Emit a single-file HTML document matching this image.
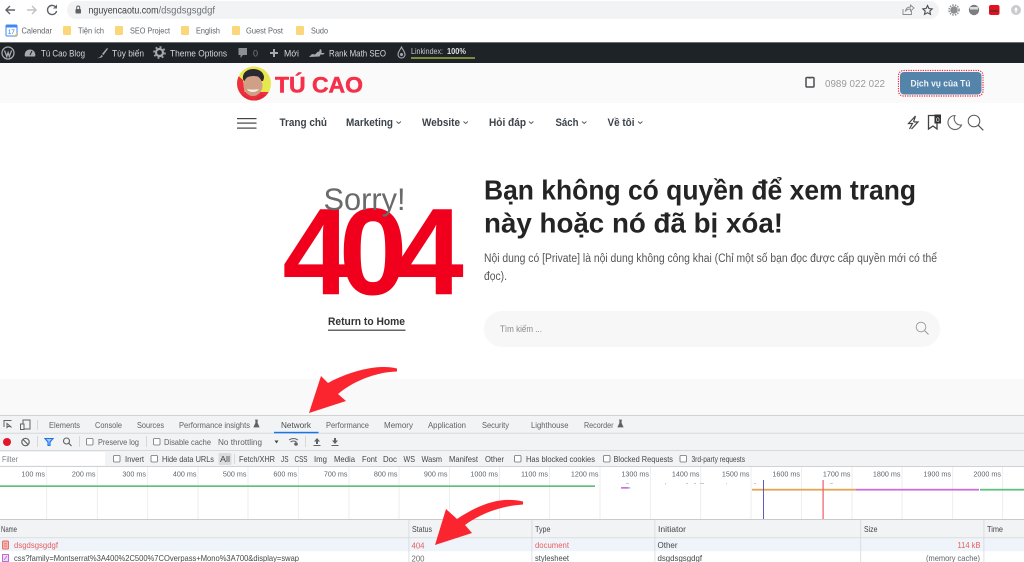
<!DOCTYPE html>
<html lang="vi"><head><meta charset="utf-8"><title>404</title>
<style>
html,body{margin:0;padding:0;background:#fff;width:1024px;height:562px;overflow:hidden}
svg{display:block}
text{font-family:"Liberation Sans","Noto Sans CJK SC",sans-serif}
.d{font-size:8.5px;fill:#5f6368}
.b{font-size:8.5px;fill:#4a4d51}
.a{font-size:9.5px;fill:#d5d8da}
.n{font-size:11px;font-weight:700;fill:#3c434a}
.t{font-size:7.2px;fill:#5f6368;text-anchor:end}
.tb{font-size:8.5px;fill:#44474a}
.cb{fill:#fff;stroke:#6e7175;stroke-width:.8}
</style></head><body>
<svg width="1024" height="562" viewBox="0 0 1024 562" xmlns="http://www.w3.org/2000/svg">
<rect width="1024" height="562" fill="#fff"/>
<!-- browser toolbar -->
<rect x="67" y="1" width="872" height="18" rx="9" fill="#f1f3f4"/>
<path d="M15 10H6M10 6l-4 4 4 4" fill="none" stroke="#5f6368" stroke-width="1.4"/>
<path d="M27 10h9M32 6l4 4-4 4" fill="none" stroke="#bfc2c5" stroke-width="1.4"/>
<path d="M56 7.5A4.6 4.6 0 1 0 56.6 11" fill="none" stroke="#5f6368" stroke-width="1.4"/><path d="M57 4.5v4h-4z" fill="#5f6368"/>
<rect x="75.5" y="9" width="5.5" height="4.5" rx=".8" fill="#5f6368"/><path d="M76.7 9V7.5a1.5 1.5 0 0 1 3 0V9" fill="none" stroke="#5f6368"/>
<text x="88.5" y="13.5" font-size="10.5" fill="#3c4043" textLength="70" lengthAdjust="spacingAndGlyphs">nguyencaotu.com</text>
<text x="158.5" y="13.5" font-size="10.5" fill="#6f7378" textLength="56.5" lengthAdjust="spacingAndGlyphs">/dsgdsgsgdgf</text>
<path d="M903 9v5.5h8.5V11M905.5 11c.5-3 2.5-4 5-4V5l3.500 3-3.500 3V9c-2 0-3.500.5-5 2z" fill="none" stroke="#8a8d91" stroke-width=".9"/>
<path d="M927.5 5.5l1.400 3 3.300.4-2.400 2.200.7 3.200-3-1.600-3 1.600.7-3.200-2.400-2.200 3.300-.4z" fill="none" stroke="#4a4d51" stroke-width="1.100"/>
<circle cx="954" cy="10" r="3.800" fill="#8d9093"/><circle cx="954" cy="10" r="5" fill="none" stroke="#8d9093" stroke-width="1.500" stroke-dasharray="1.500 1.200"/>
<circle cx="974" cy="10" r="5.200" fill="#7c7f82"/><rect x="970" y="7" width="8" height="2.500" fill="#ddd"/>
<rect x="989" y="5" width="10.500" height="10" rx="2" fill="#e3101f"/><rect x="990" y="10" width="8.500" height="2" fill="#80262a"/>
<circle cx="1016" cy="10" r="5" fill="#c9cbce"/><path d="M1016 7l2 3h-1.200v2.500h-1.600V10H1014z" fill="#fff"/>
<!-- bookmarks -->
<rect x="6" y="25" width="11" height="11" rx="1" fill="#fff" stroke="#4285f4" stroke-width="1"/><rect x="6" y="25" width="11" height="2.500" fill="#4285f4"/><path d="M17 33v3h-3z" fill="#fbbc05"/><text x="8" y="34" font-size="6" fill="#1a73e8">17</text>
<text x="21.500" y="33.500" class="d" textLength="30.500" lengthAdjust="spacingAndGlyphs">Calendar</text>
<rect x="63" y="26" width="8" height="9" rx="1" fill="#fbd77a"/><text x="78" y="33.500" class="d" textLength="26" lengthAdjust="spacingAndGlyphs">Tiện ích</text>
<rect x="115" y="26" width="8" height="9" rx="1" fill="#fbd77a"/><text x="130" y="33.500" class="d" textLength="40" lengthAdjust="spacingAndGlyphs">SEO Project</text>
<rect x="181" y="26" width="8" height="9" rx="1" fill="#fbd77a"/><text x="196" y="33.500" class="d" textLength="24" lengthAdjust="spacingAndGlyphs">English</text>
<rect x="232" y="26" width="8" height="9" rx="1" fill="#fbd77a"/><text x="246" y="33.500" class="d" textLength="37" lengthAdjust="spacingAndGlyphs">Guest Post</text>
<rect x="296" y="26" width="8" height="9" rx="1" fill="#fbd77a"/><text x="311" y="33.500" class="d" textLength="17" lengthAdjust="spacingAndGlyphs">Sudo</text>
<!-- admin bar -->
<rect y="42" width="1024" height="21" fill="#1d2327"/><rect y="42" width="1024" height=".7" fill="#8d9194"/>
<circle cx="8" cy="53" r="6" fill="none" stroke="#a7aaad" stroke-width="1.300"/><path d="M4.500 50.500l2.300 6 1.300-4 1.200 4 2.300-6" fill="none" stroke="#a7aaad" stroke-width="1.300"/>
<path d="M25 56.500a5.300 5.300 0 1 1 10 0z" fill="#a7aaad"/><path d="M30 55l2-4" stroke="#1d2327"/>
<text x="41" y="56.500" class="a" textLength="44" lengthAdjust="spacingAndGlyphs">Tú Cao Blog</text>
<path d="M97 58c3 0 3.500-1.500 4.500-3l1.500 1c-1 1.500-3 2.500-6 2zM102 54l5-6 1 .8-4.500 6.200z" fill="#a7aaad"/>
<text x="112" y="56.500" class="a" textLength="32" lengthAdjust="spacingAndGlyphs">Tùy biến</text>
<circle cx="159.500" cy="52.500" r="3.500" fill="none" stroke="#a7aaad" stroke-width="2.200"/><circle cx="159.500" cy="52.500" r="5.500" fill="none" stroke="#a7aaad" stroke-width="1.600" stroke-dasharray="2 2.300"/>
<text x="170" y="56.500" class="a" textLength="57" lengthAdjust="spacingAndGlyphs">Theme Options</text>
<path d="M238.500 48h8.500v7h-4l-2.500 3v-3h-2z" fill="#8c8f94"/>
<text x="253" y="56.500" font-size="9.500" fill="#7b7f84" textLength="5" lengthAdjust="spacingAndGlyphs">0</text>
<path d="M274 49v8M270 53h8" stroke="#a7aaad" stroke-width="2"/>
<text x="284" y="56.500" class="a" textLength="15" lengthAdjust="spacingAndGlyphs">Mới</text>
<path d="M309 57l3-3 3 .5 3-3 1 .5 1-3 1.500 1v3h3l-1 1.500h-3l-1 2z" fill="#a7aaad"/>
<text x="329" y="56.500" class="a" textLength="57" lengthAdjust="spacingAndGlyphs">Rank Math SEO</text>
<path d="M401.500 47c1.500 3 3.500 5 3.500 7.500a3.500 3.500 0 0 1-7 0c0-2.500 2-4.500 3.500-7.500z" fill="none" stroke="#a7aaad" stroke-width="1.100"/><circle cx="401.500" cy="54.500" r="1.500" fill="#a7aaad"/>
<text x="411" y="54" font-size="8" fill="#c5c8ca" textLength="32" lengthAdjust="spacingAndGlyphs">Linkindex:</text><text x="447" y="54" font-size="8" font-weight="700" fill="#e0e2e3" textLength="19" lengthAdjust="spacingAndGlyphs">100%</text>
<rect x="411" y="57" width="64" height="2" fill="#7a8c3a"/>
<!-- header -->
<rect y="63" width="1024" height="40" fill="#fafafa"/>
<defs><clipPath id="av"><circle cx="254" cy="83.500" r="17"/></clipPath></defs>
<g clip-path="url(#av)">
<rect x="236" y="66" width="36" height="36" fill="#e6e84c"/>
<path d="M236 74l7 6 3 22h-10zM244 92h28v12h-28z" fill="#ee2f3f"/>
<path d="M243 79c-1-6 4-10 10-10s11 3 11 9l-1 3h-19z" fill="#2b2a30"/>
<ellipse cx="253" cy="85.500" rx="9.500" ry="10.500" fill="#cf9f86"/>
<path d="M244 79c3-2 6-3 9-3s7 .5 10 3l1-3-6-5h-9l-5 3z" fill="#2b2a30"/>
<path d="M247 89c2 4 10 4 12 0-3 .8-9 .8-12 0z" fill="#f5efe9"/>
<path d="M243 94l10 6 9-6 9 3v6h-30v-6z" fill="#e2283a"/>
</g>
<text x="275" y="92.500" font-size="22" font-weight="700" fill="#f5304a" stroke="#f5304a" stroke-width=".5" textLength="88" lengthAdjust="spacingAndGlyphs">TÚ CAO</text>
<rect x="806" y="77.500" width="8" height="9.500" rx="1" fill="none" stroke="#4a4d51" stroke-width="1.500"/><rect x="808.500" y="77" width="3" height="1.500" fill="#4a4d51"/>
<text x="825" y="87" font-size="10.500" fill="#9a9a9a" textLength="60" lengthAdjust="spacingAndGlyphs">0989 022 022</text>
<rect x="898.500" y="70.500" width="84.500" height="25.500" rx="5" fill="none" stroke="#ee1f3a" stroke-width="1.200" stroke-dasharray="1.200 1.200"/>
<rect x="900" y="72" width="81.500" height="22.500" rx="4" fill="#5584ab"/>
<text x="910.500" y="86.500" font-size="9.500" font-weight="700" fill="#f0f4f8" textLength="60" lengthAdjust="spacingAndGlyphs">Dịch vụ của Tú</text>
<!-- nav -->
<rect x="237" y="118" width="19.500" height="1.200" fill="#444"/><rect x="237" y="122.500" width="19.500" height="1.200" fill="#444"/><rect x="237" y="127.500" width="19.500" height="1.200" fill="#444"/>
<text x="279.500" y="126" class="n" textLength="47.500" lengthAdjust="spacingAndGlyphs">Trang chủ</text>
<text x="346" y="126" class="n" textLength="47" lengthAdjust="spacingAndGlyphs">Marketing</text>
<text x="422" y="126" class="n" textLength="38" lengthAdjust="spacingAndGlyphs">Website</text>
<text x="489" y="126" class="n" textLength="37" lengthAdjust="spacingAndGlyphs">Hỏi đáp</text>
<text x="555.500" y="126" class="n" textLength="23" lengthAdjust="spacingAndGlyphs">Sách</text>
<text x="607.500" y="126" class="n" textLength="27" lengthAdjust="spacingAndGlyphs">Về tôi</text>
<g fill="none" stroke="#555" stroke-width=".9"><path d="M396.500 121.500l2.200 2 2.200-2"/><path d="M463.500 121.500l2.200 2 2.200-2"/><path d="M529 121.500l2.200 2 2.200-2"/><path d="M582 121.500l2.200 2 2.200-2"/><path d="M638 121.500l2.200 2 2.200-2"/></g>
<path d="M915.500 116l-7 7.500h4l-3 5.500M914 122h4l-6.500 7M915.500 116l-2 6" fill="none" stroke="#444" stroke-width="1.200"/>
<path d="M928.500 115.500h8.500v13.500l-4-3-4.500 3z" fill="none" stroke="#444" stroke-width="1.300"/><rect x="934.500" y="114.500" width="6.500" height="9" fill="#333"/><text x="936" y="122" font-size="6.500" fill="#fff">0</text>
<path d="M955 115.500a7 7 0 1 0 6.500 9.500 6.500 6.500 0 0 1-6.500-9.500z" fill="none" stroke="#666" stroke-width="1.100"/>
<circle cx="974" cy="121" r="5.800" fill="none" stroke="#555" stroke-width="1"/><path d="M978.300 125.300l5 5" stroke="#555" stroke-width="1.200"/>
<!-- content -->
<rect y="379" width="1024" height="36" fill="#f9f9f9"/>
<text x="282.500" y="294.500" font-size="123" font-weight="700" fill="#f0001c" letter-spacing="-12">404</text>
<text x="323.500" y="210" font-size="31.500" fill="#6a6a6a" textLength="82" lengthAdjust="spacingAndGlyphs">Sorry!</text>
<text x="328" y="325" font-size="11" font-weight="700" fill="#333" textLength="77" lengthAdjust="spacingAndGlyphs">Return to Home</text>
<rect x="328" y="329.500" width="77.500" height="1.500" fill="#666"/>
<text x="484" y="199.500" font-size="28" font-weight="700" fill="#242424" textLength="432" lengthAdjust="spacingAndGlyphs">Bạn không có quyền để xem trang</text>
<text x="484" y="232.500" font-size="28" font-weight="700" fill="#242424" textLength="299" lengthAdjust="spacingAndGlyphs">này hoặc nó đã bị xóa!</text>
<text x="484" y="262" font-size="11.500" fill="#555" textLength="453" lengthAdjust="spacingAndGlyphs">Nội dung có [Private] là nội dung không công khai (Chỉ một số bạn đọc được cấp quyền mới có thể</text>
<text x="484" y="280" font-size="11.500" fill="#555" textLength="23" lengthAdjust="spacingAndGlyphs">đọc).</text>
<rect x="484" y="311" width="456" height="36" rx="18" fill="#f7f7f7"/>
<text x="500" y="332" font-size="9" fill="#8a8a8a" textLength="42" lengthAdjust="spacingAndGlyphs">Tìm kiếm ...</text>
<circle cx="921" cy="327" r="4.800" fill="none" stroke="#999" stroke-width=".9"/><path d="M924.500 330.500l4 4" stroke="#999"/>
<!-- devtools -->
<rect y="415" width="1024" height="147" fill="#fff"/>
<rect y="416" width="1024" height="50" fill="#f1f3f4"/>
<rect y="415" width="1024" height="1" fill="#d0d2d5"/><rect y="432.800" width="1024" height=".8" fill="#d0d2d5"/><rect y="450" width="1024" height=".8" fill="#d0d2d5"/>
<path d="M4 427v-6.500h7.500M7 423.500l4.500 4M7 423.500v4l1-1h2.500z" fill="none" stroke="#5f6368"/>
<rect x="23" y="420" width="7" height="9" fill="none" stroke="#5f6368"/><rect x="20.500" y="424" width="3.500" height="5.500" fill="#f1f3f4" stroke="#5f6368"/>
<rect x="37" y="420" width=".7" height="10" fill="#ccc"/>
<text x="49" y="428" class="d" textLength="31" lengthAdjust="spacingAndGlyphs">Elements</text>
<text x="95" y="428" class="d" textLength="27" lengthAdjust="spacingAndGlyphs">Console</text>
<text x="137" y="428" class="d" textLength="27" lengthAdjust="spacingAndGlyphs">Sources</text>
<text x="179" y="428" class="d" textLength="71" lengthAdjust="spacingAndGlyphs">Performance insights</text>
<path d="M255 420h3M255.800 420v3l-1.800 4h5l-1.800-4v-3" fill="#5f6368" stroke="#5f6368" stroke-width=".8"/>
<text x="281" y="428" class="b" textLength="30" lengthAdjust="spacingAndGlyphs">Network</text>
<rect x="274" y="431.800" width="44.500" height="1.500" fill="#1a73e8"/>
<text x="326" y="428" class="d" textLength="43" lengthAdjust="spacingAndGlyphs">Performance</text>
<text x="384" y="428" class="d" textLength="29" lengthAdjust="spacingAndGlyphs">Memory</text>
<text x="428" y="428" class="d" textLength="38" lengthAdjust="spacingAndGlyphs">Application</text>
<text x="482" y="428" class="d" textLength="27" lengthAdjust="spacingAndGlyphs">Security</text>
<text x="531" y="428" class="d" textLength="37.500" lengthAdjust="spacingAndGlyphs">Lighthouse</text>
<text x="584" y="428" class="d" textLength="29.500" lengthAdjust="spacingAndGlyphs">Recorder</text>
<path d="M619 420h3M619.800 420v3l-1.800 4h5l-1.800-4v-3" fill="#5f6368" stroke="#5f6368" stroke-width=".8"/>
<!-- toolbar -->
<circle cx="7" cy="442" r="4" fill="#e3162b"/>
<circle cx="25.500" cy="442" r="3.700" fill="none" stroke="#5f6368" stroke-width="1.200"/><path d="M23 439.500l5 5" stroke="#5f6368" stroke-width="1.200"/>
<rect x="37" y="436" width=".7" height="11" fill="#ccc"/>
<path d="M45 438.500h8l-3 3.500v3.500h-2V442z" fill="#a8c7fa" stroke="#1a73e8" stroke-width="1.100"/>
<circle cx="66.500" cy="441" r="3" fill="none" stroke="#5f6368" stroke-width="1.100"/><path d="M68.700 443.200l2.800 2.800" stroke="#5f6368" stroke-width="1.200"/>
<rect x="79" y="436" width=".7" height="11" fill="#ccc"/>
<rect x="86.500" y="438.500" width="6.500" height="6.500" rx="1" class="cb"/>
<text x="98" y="445" class="d" textLength="41" lengthAdjust="spacingAndGlyphs">Preserve log</text>
<rect x="146" y="436" width=".7" height="11" fill="#ccc"/>
<rect x="153.500" y="438.500" width="6.500" height="6.500" rx="1" class="cb"/>
<text x="164" y="445" class="d" textLength="47" lengthAdjust="spacingAndGlyphs">Disable cache</text>
<text x="218" y="445" class="d" textLength="44" lengthAdjust="spacingAndGlyphs">No throttling</text>
<path d="M274.500 440.500h4l-2 3z" fill="#444"/>
<path d="M289 440c3-2 6-2 9 0M290.500 442c2-1.300 4-1.300 6 0" fill="none" stroke="#5f6368" stroke-width="1"/><circle cx="296" cy="444" r="1.800" fill="#5f6368"/>
<rect x="305" y="436" width=".7" height="11" fill="#ccc"/>
<path d="M317 438l3 3.500h-2v2.500h-2v-2.500h-2zM313.500 445h7v1h-7z" fill="#5f6368"/>
<path d="M335 444l3-3.500h-2V438h-2v2.500h-2zM331.500 445h7v1h-7z" fill="#5f6368"/>
<!-- filter -->
<rect y="452" width="105" height="13.500" fill="#fff"/>
<text x="2" y="462" class="d" fill-opacity=".8" textLength="16" lengthAdjust="spacingAndGlyphs">Filter</text>
<rect x="113.500" y="455.500" width="6.500" height="6.500" rx="1" class="cb"/><text x="125" y="462" class="tb" textLength="19" lengthAdjust="spacingAndGlyphs">Invert</text>
<rect x="151" y="455.500" width="6.500" height="6.500" rx="1" class="cb"/><text x="162" y="462" class="tb" textLength="52" lengthAdjust="spacingAndGlyphs">Hide data URLs</text>
<rect x="218.500" y="453" width="13" height="12" rx="1.500" fill="#dadce0"/><text x="220" y="462" class="tb" textLength="10" lengthAdjust="spacingAndGlyphs">All</text>
<rect x="234" y="454" width=".7" height="10" fill="#ccc"/>
<text x="239" y="462" class="tb" textLength="36" lengthAdjust="spacingAndGlyphs">Fetch/XHR</text>
<text x="281" y="462" class="tb" textLength="7.500" lengthAdjust="spacingAndGlyphs">JS</text>
<text x="294.500" y="462" class="tb" textLength="13" lengthAdjust="spacingAndGlyphs">CSS</text>
<text x="314" y="462" class="tb" textLength="13" lengthAdjust="spacingAndGlyphs">Img</text>
<text x="334" y="462" class="tb" textLength="21" lengthAdjust="spacingAndGlyphs">Media</text>
<text x="362" y="462" class="tb" textLength="15" lengthAdjust="spacingAndGlyphs">Font</text>
<text x="383" y="462" class="tb" textLength="14" lengthAdjust="spacingAndGlyphs">Doc</text>
<text x="403.500" y="462" class="tb" textLength="11.500" lengthAdjust="spacingAndGlyphs">WS</text>
<text x="421.500" y="462" class="tb" textLength="20.500" lengthAdjust="spacingAndGlyphs">Wasm</text>
<text x="449" y="462" class="tb" textLength="29" lengthAdjust="spacingAndGlyphs">Manifest</text>
<text x="485" y="462" class="tb" textLength="19" lengthAdjust="spacingAndGlyphs">Other</text>
<rect x="514.500" y="455.500" width="6.500" height="6.500" rx="1" class="cb"/><text x="526" y="462" class="tb" textLength="69" lengthAdjust="spacingAndGlyphs">Has blocked cookies</text>
<rect x="603.500" y="455.500" width="6.500" height="6.500" rx="1" class="cb"/><text x="613.500" y="462" class="tb" textLength="59.500" lengthAdjust="spacingAndGlyphs">Blocked Requests</text>
<rect x="680" y="455.500" width="6.500" height="6.500" rx="1" class="cb"/><text x="691.500" y="462" class="tb" textLength="53.500" lengthAdjust="spacingAndGlyphs">3rd-party requests</text>
<!-- overview -->
<rect y="466" width="1024" height="1" fill="#d0d2d5"/>
<g stroke="#e9eaec" stroke-width=".8">
<path d="M46.700 467V519M97.300 467V519M147.700 467V519M198 467V519M248 467V519M298.500 467V519M349 467V519M399 467V519M449.500 467V519M499.500 467V519M549.500 467V519M600 467V519M650.500 467V519M700.700 467V519M751 467V519M801.500 467V519M852 467V519M902 467V519M952.700 467V519M1002.700 467V519"/>
</g>
<g>
<text x="45" y="476.500" class="t">100 ms</text><text x="95.500" y="476.500" class="t">200 ms</text><text x="146" y="476.500" class="t">300 ms</text><text x="196.500" y="476.500" class="t">400 ms</text><text x="246.500" y="476.500" class="t">500 ms</text><text x="297" y="476.500" class="t">600 ms</text><text x="347.500" y="476.500" class="t">700 ms</text><text x="397.500" y="476.500" class="t">800 ms</text><text x="447.500" y="476.500" class="t">900 ms</text><text x="498" y="476.500" class="t">1000 ms</text><text x="548" y="476.500" class="t">1100 ms</text><text x="598.500" y="476.500" class="t">1200 ms</text><text x="649" y="476.500" class="t">1300 ms</text><text x="699.500" y="476.500" class="t">1400 ms</text><text x="749.500" y="476.500" class="t">1500 ms</text><text x="800" y="476.500" class="t">1600 ms</text><text x="850.500" y="476.500" class="t">1700 ms</text><text x="900.500" y="476.500" class="t">1800 ms</text><text x="951" y="476.500" class="t">1900 ms</text><text x="1001" y="476.500" class="t">2000 ms</text>
</g>
<rect x="0" y="485.300" width="595" height="1.700" fill="#5fc07f"/>
<rect x="621" y="487" width="7.500" height="1.700" fill="#cf6fe0"/><rect x="628.500" y="487" width="2" height="1.700" fill="#9fd6f0"/>
<g fill="#c9c9c9"><rect x="626" y="483" width="3" height="1"/><rect x="665" y="483" width="1" height="1.500"/><rect x="686" y="483" width="2" height="1"/><rect x="694" y="483" width="2" height="1"/><rect x="700" y="483" width="4" height="1"/><rect x="726" y="483" width="1" height="1"/><rect x="754" y="483" width="2" height="1"/><rect x="830" y="483" width="3" height="1"/></g>
<rect x="752" y="488.800" width="104" height="1.800" fill="#e6a452"/>
<rect x="856" y="488.800" width="123" height="1.800" fill="#c96fdc"/>
<rect x="980" y="488.800" width="44" height="1.800" fill="#5fc07f"/>
<rect x="763" y="480" width=".9" height="39" fill="#4a4fb0"/>
<rect x="822.500" y="480" width="1.200" height="39" fill="#ee5a66"/>
<!-- table -->
<rect y="519" width="1024" height="1" fill="#c8cacd"/>
<rect y="520" width="1024" height="17.500" fill="#f1f3f4"/>
<rect y="537.500" width="1024" height=".8" fill="#d0d2d5"/>
<rect y="538.300" width="1024" height="13" fill="#eff4fb"/>
<g fill="#d6d8db"><rect x="408.500" y="520" width=".8" height="42"/><rect x="531.500" y="520" width=".8" height="42"/><rect x="654.500" y="520" width=".8" height="42"/><rect x="860.300" y="520" width=".8" height="42"/><rect x="983.500" y="520" width=".8" height="42"/></g>
<text x="1" y="532" class="tb" textLength="16" lengthAdjust="spacingAndGlyphs">Name</text>
<text x="412" y="532" class="tb" textLength="20" lengthAdjust="spacingAndGlyphs">Status</text>
<text x="535" y="532" class="tb" textLength="15.500" lengthAdjust="spacingAndGlyphs">Type</text>
<text x="658" y="532" class="tb" textLength="28" lengthAdjust="spacingAndGlyphs">Initiator</text>
<text x="864" y="532" class="tb" textLength="13.500" lengthAdjust="spacingAndGlyphs">Size</text>
<text x="987" y="532" class="tb" textLength="16" lengthAdjust="spacingAndGlyphs">Time</text>
<rect x="2.500" y="541" width="6" height="8" rx=".8" fill="#f5b5b0" stroke="#e46962" stroke-width=".9"/><path d="M4 543.500h3M4 545h3M4 546.500h3" stroke="#e46962" stroke-width=".6"/>
<g font-size="8.500" fill="#e8605c"><text x="14" y="548" textLength="44" lengthAdjust="spacingAndGlyphs">dsgdsgsgdgf</text><text x="411.500" y="548.500" textLength="13" lengthAdjust="spacingAndGlyphs">404</text><text x="535" y="548" textLength="34" lengthAdjust="spacingAndGlyphs">document</text><text x="957.500" y="548" textLength="23" lengthAdjust="spacingAndGlyphs">114 kB</text></g>
<text x="657.500" y="548" class="tb" textLength="20" lengthAdjust="spacingAndGlyphs">Other</text>
<rect x="2.500" y="554.500" width="6" height="7" fill="#f1dcf7" stroke="#b55fd0" stroke-width=".9"/><path d="M4 560l3-4" stroke="#b55fd0" stroke-width=".7"/>
<text x="14" y="561" class="tb" textLength="285" lengthAdjust="spacingAndGlyphs">css?family=Montserrat%3A400%2C500%7COverpass+Mono%3A700&amp;display=swap</text>
<text x="411.500" y="561.500" class="tb" fill-opacity=".8" textLength="13" lengthAdjust="spacingAndGlyphs">200</text>
<text x="535" y="561" class="tb" textLength="34" lengthAdjust="spacingAndGlyphs">stylesheet</text>
<text x="657.500" y="561" class="tb" textLength="44.500" lengthAdjust="spacingAndGlyphs">dsgdsgsgdgf</text>
<text x="926" y="561" class="d" textLength="54" lengthAdjust="spacingAndGlyphs">(memory cache)</text>
<!-- arrows -->
<path d="M397 368.500C380 364 352 370 328 383L321 376L309 413L346 401L338 394C352 382 375 372 397 371.500Z" fill="#fb2530"/>
<path d="M523 501.500C500 496 478 505 457 519L446 509L435 545L472 533L465 525C480 514 500 506 523 504.500Z" fill="#fb2530"/>
</svg>
</body></html>
